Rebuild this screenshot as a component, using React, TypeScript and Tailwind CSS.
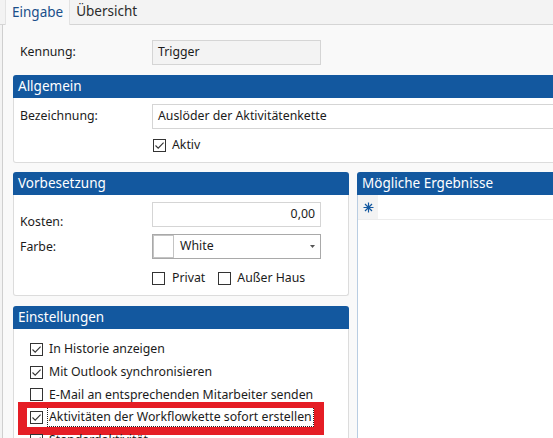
import type { ReactNode } from "react";

const Check = ({ checked = false }: { checked?: boolean }) => (
  <span className="w-[13px] h-[13px] shrink-0 border border-[#333] bg-white flex items-center justify-center">
    {checked && (
      <svg width="11" height="11" viewBox="0 0 11 11">
        <path d="M1.5 5.5 L4.2 8.2 L9.6 2.6" stroke="#333" strokeWidth="1.1" fill="none" />
      </svg>
    )}
  </span>
);

const Panel = ({
  title,
  className = "",
  bodyClass = "",
  children,
}: {
  title: string;
  className?: string;
  bodyClass?: string;
  children?: ReactNode;
}) => (
  <div className={`flex flex-col shrink-0 ${className}`}>
    <div className="h-[23px] shrink-0 bg-[#13589f] text-white text-[13.5px] rounded-t-[3px] pl-[5px] flex items-center">
      {title}
    </div>
    <div className={`bg-white border border-t-0 border-[#dcdcdc] rounded-b-[3px] ${bodyClass}`}>{children}</div>
  </div>
);

const Row = ({ checked, label, focus }: { checked: boolean; label: string; focus?: boolean }) => (
  <div className="h-[22.7px] flex items-center pl-[16px] gap-[6px] relative">
    <Check checked={checked} />
    <span className={focus ? "border border-dotted border-[#222] leading-[18px] px-px -ml-[2px]" : ""}>{label}</span>
    {focus && (
      <div className="absolute left-[4px] right-[24px] -top-[4px] h-[33px] border-[#e51d25] border-l-[9px] border-t-[6px] border-b-[8px] border-r-[10px]" />
    )}
  </div>
);

export default function App() {
  return (
    <div className="w-[553px] h-[438px] overflow-hidden bg-[#f3f3f3] flex flex-col text-[12.3px] text-[#1b1b1b] font-['Segoe_UI','Noto_Sans',sans-serif]">
      {/* tabs */}
      <div className="h-[25px] shrink-0 flex items-end pl-[5px] border-b border-[#d5d5d5]">
        <div className="h-[26px] -mb-px px-[6px] flex items-center bg-[#f9f9f9] border-x border-t border-[#e3e3e3] text-[13.5px] text-[#1a4f8a]">
          Eingabe
        </div>
        <div className="h-[25px] px-[6px] flex items-center text-[13.5px] text-[#2a2a2a]">Übersicht</div>
      </div>

      {/* content */}
      <div className="flex-1 ml-[2px] border-l border-[#cfcfcf] bg-[#f9f9f9] pl-[10px] pt-[15px] flex flex-col">
        <div className="h-[25px] flex items-center">
          <span className="w-[139px] pl-[7px]">Kennung:</span>
          <div className="w-[169px] h-[25px] bg-[#f3f3f3] border border-[#d5d5d5] pl-[5px] flex items-center">Trigger</div>
        </div>

        <Panel title="Allgemein" className="mt-[10px] w-[580px]" bodyClass="pt-[6px] pb-[10px]">
          <div className="h-[25px] flex items-center">
            <span className="w-[138px] pl-[6px]">Bezeichnung:</span>
            <div className="flex-1 h-[25px] bg-white border border-[#d5d5d5] pl-[5px] flex items-center">
              Auslöder der Aktivitätenkette
            </div>
          </div>
          <div className="mt-[10px] pl-[139px] flex items-center gap-[6px] h-[13px]">
            <Check checked />
            <span>Aktiv</span>
          </div>
        </Panel>

        <div className="mt-[9px] flex items-start">
          <div className="w-[336px] shrink-0 flex flex-col">
            <Panel title="Vorbesetzung" bodyClass="pt-[7px] pb-[10px]">
              <div className="h-[25px] flex items-start">
                <span className="w-[138px] pl-[6px] pt-[11px]">Kosten:</span>
                <div className="w-[169px] h-[25px] bg-white border border-[#d5d5d5] pr-[5px] flex items-center justify-end">
                  0,00
                </div>
              </div>
              <div className="mt-[7px] h-[25px] flex items-center">
                <span className="w-[138px] pl-[6px] pt-[2px]">Farbe:</span>
                <div className="w-[169px] h-[25px] bg-white border border-[#a9a9a9] flex items-center">
                  <span className="w-[21px] h-[23px] border border-[#c4c4c4] bg-white" />
                  <span className="ml-[6px] flex-1">White</span>
                  <svg width="5" height="3" viewBox="0 0 5 3" className="mr-[5px]">
                    <path d="M0 0 H5 L2.5 3 Z" fill="#555" />
                  </svg>
                </div>
              </div>
              <div className="mt-[13px] h-[13px] pl-[138px] flex items-center">
                <Check />
                <span className="ml-[7px]">Privat</span>
                <span className="ml-[13px]">
                  <Check />
                </span>
                <span className="ml-[6px]">Außer Haus</span>
              </div>
            </Panel>

            <Panel title="Einstellungen" className="mt-[10px]" bodyClass="pt-[9px] h-[200px]">
              <Row checked label="In Historie anzeigen" />
              <Row checked label="Mit Outlook synchronisieren" />
              <Row checked={false} label="E-Mail an entsprechenden Mitarbeiter senden" />
              <Row checked label="Aktivitäten der Workflowkette sofort erstellen" focus />
              <Row checked label="Standardaktivität" />
            </Panel>
          </div>

          <Panel title="Mögliche Ergebnisse" className="ml-[8px] w-[220px]" bodyClass="h-[300px] border-l-[#b9cde2]">
            <div className="h-[25px] flex border-b border-[#ececec]">
              <div className="w-[20px] bg-[#f3f3f3] flex items-center justify-center">
                <svg width="11" height="11" viewBox="0 0 11 11">
                  <path d="M5.5 0.5 V10.5 M0.5 5.5 H10.5 M2 2 L9 9 M9 2 L2 9" stroke="#13589f" strokeWidth="1.2" />
                </svg>
              </div>
            </div>
          </Panel>
        </div>
      </div>
    </div>
  );
}
